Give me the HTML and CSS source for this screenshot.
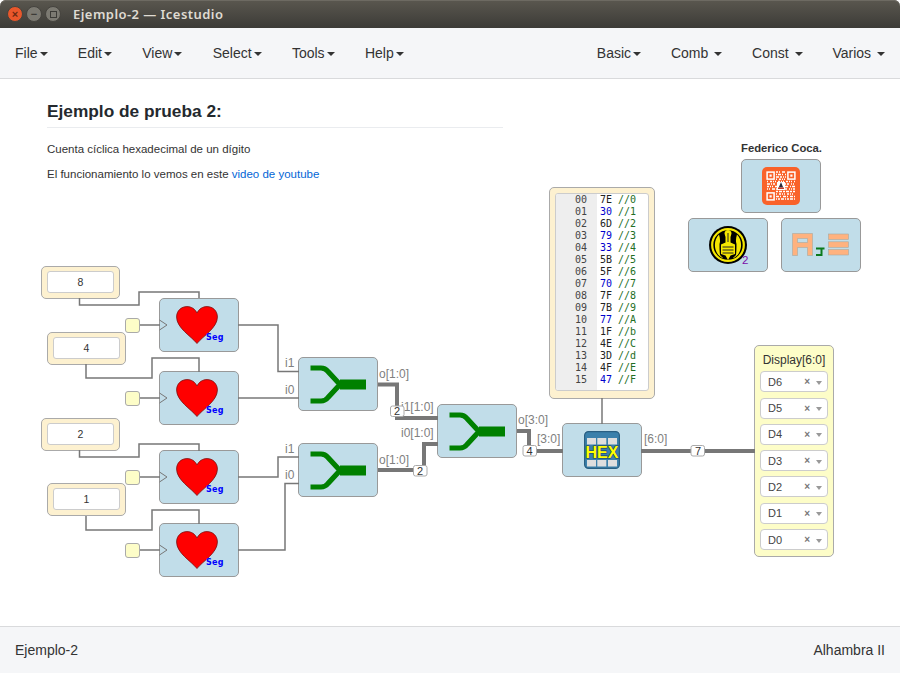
FILE: index.html
```html
<!DOCTYPE html>
<html lang="en">
<head>
    <meta charset="UTF-8">
    <meta name="viewport" content="width=device-width, initial-scale=1.0">
    <title>Ejemplo-2 - Icestudio</title>
    <link rel="stylesheet" href="styles.css">
</head>
<body>
    <!-- Shapes used more than once -->
    <svg class="defs" width="0" height="0">
        <symbol id="heart" viewBox="0 0 42 38">
            <path d="M21 37.500C15 30 .6 22 .6 11 .6 4.500 5.500 .6 11 .6c4.500 0 8 2.400 10 6.400 2-4 5.500-6.400 10-6.400 5.500 0 10.400 3.900 10.400 10.400C41.400 22 27 30 21 37.500Z" fill="#f00" stroke="#7a1010" stroke-width=".8"/>
        </symbol>
        <symbol id="mux" viewBox="0 0 79 53">
            <path d="M11.500 10H22c3 0 5 1 7 3.500L41 26.500 29 39.500C27 42 25 43 22 43H11.500" fill="none" stroke="#008000" stroke-width="5.200"/>
            <rect x="41" y="21.500" width="26" height="10" fill="#008000"/>
        </symbol>
    </svg>

    <header class="titlebar">
        <div class="win-buttons">
            <span class="win-btn win-close">&times;</span>
            <span class="win-btn">&minus;</span>
            <span class="win-btn"><i class="win-max"></i></span>
        </div>
        <span class="win-title">Ejemplo-2 — Icestudio</span>
    </header>

    <nav class="menubar">
        <div class="menu-group">
            <a class="menu-item">File<span class="caret"></span></a>
            <a class="menu-item">Edit<span class="caret"></span></a>
            <a class="menu-item">View<span class="caret"></span></a>
            <a class="menu-item">Select<span class="caret"></span></a>
            <a class="menu-item">Tools<span class="caret"></span></a>
            <a class="menu-item">Help<span class="caret"></span></a>
        </div>
        <div class="menu-group menu-right">
            <a class="menu-item">Basic<span class="caret"></span></a>
            <a class="menu-item">Comb <span class="caret"></span></a>
            <a class="menu-item">Const <span class="caret"></span></a>
            <a class="menu-item">Varios <span class="caret"></span></a>
        </div>
    </nav>

    <main class="canvas">
        <section class="note">
            <h2>Ejemplo de prueba 2:</h2>
            <p>Cuenta cíclica hexadecimal de un dígito</p>
            <p>El funcionamiento lo vemos en este <a href="#">video de youtube</a></p>
        </section>

        <p class="author">Federico Coca.</p>

        <!-- Constants -->
        <div class="const const-8"><span class="const-value">8</span></div>
        <div class="const const-4"><span class="const-value">4</span></div>
        <div class="const const-2"><span class="const-value">2</span></div>
        <div class="const const-1"><span class="const-value">1</span></div>

        <!-- Clock inputs -->
        <div class="clock clock-a"></div>
        <div class="clock clock-b"></div>
        <div class="clock clock-c"></div>
        <div class="clock clock-d"></div>

        <!-- Counter blocks -->
        <div class="block seg seg-a"><svg class="heart"><use href="#heart"/></svg><span class="seg-label">Seg</span></div>
        <div class="block seg seg-b"><svg class="heart"><use href="#heart"/></svg><span class="seg-label">Seg</span></div>
        <div class="block seg seg-c"><svg class="heart"><use href="#heart"/></svg><span class="seg-label">Seg</span></div>
        <div class="block seg seg-d"><svg class="heart"><use href="#heart"/></svg><span class="seg-label">Seg</span></div>

        <!-- Bus joins -->
        <div class="block mux-a"><svg class="mux"><use href="#mux"/></svg></div>
        <div class="block mux-b"><svg class="mux"><use href="#mux"/></svg></div>
        <div class="block mux-c"><svg class="mux"><use href="#mux"/></svg></div>

        <!-- Decoder memory -->
        <div class="memory">
            <div class="editor">
                <div class="gutter">00<br>01<br>02<br>03<br>04<br>05<br>06<br>07<br>08<br>09<br>10<br>11<br>12<br>13<br>14<br>15</div>
                <div class="code">
                    <div>7E <em>//0</em></div>
                    <div><b>30</b> <em>//1</em></div>
                    <div>6D <em>//2</em></div>
                    <div><b>79</b> <em>//3</em></div>
                    <div><b>33</b> <em>//4</em></div>
                    <div>5B <em>//5</em></div>
                    <div>5F <em>//6</em></div>
                    <div><b>70</b> <em>//7</em></div>
                    <div>7F <em>//8</em></div>
                    <div>7B <em>//9</em></div>
                    <div><b>77</b> <em>//A</em></div>
                    <div>1F <em>//b</em></div>
                    <div>4E <em>//C</em></div>
                    <div>3D <em>//d</em></div>
                    <div>4F <em>//E</em></div>
                    <div><b>47</b> <em>//F</em></div>
                </div>
            </div>
        </div>

        <!-- HEX block -->
        <div class="block hex">
            <svg class="hex-icon" viewBox="0 0 36 38">
                <rect x=".6" y=".6" width="34.800" height="36.800" rx="4" fill="#3b80ab" stroke="#2a5f82" stroke-width="1.200"/>
                <g fill="#dedede">
                    <rect x="3" y="7" width="9" height="6.500"/><rect x="13.300" y="7" width="9" height="6.500"/><rect x="24" y="7" width="9" height="6.500"/>
                    <rect x="3" y="29" width="9" height="6.500"/><rect x="13.300" y="29" width="9" height="6.500"/><rect x="24" y="29" width="9" height="6.500"/>
                </g>
                <text class="hex-text" x="18" y="26.500" text-anchor="middle">HEX</text>
            </svg>
        </div>

        <!-- Info icons -->
        <div class="block info-qr">
            <svg class="qr-icon" viewBox="0 0 38 38">
                <rect width="38" height="38" rx="5" fill="#f9622a"/>
                <g fill="none" stroke="#fff" stroke-width="1.500">
                    <rect x="5.100" y="5.100" width="7" height="7"/><rect x="25.900" y="5.100" width="7" height="7"/><rect x="5.100" y="25.900" width="7" height="7"/>
                    <path stroke-dasharray="2 1 1 2 3 1" d="M14 5.100H24"/>
                    <path stroke-dasharray="1 1 3 1 1 2" d="M14 7.500H24"/>
                    <path stroke-dasharray="3 1 2 1 1 1" d="M14 10H24"/>
                    <path stroke-dasharray="1 2 2 1 1 1" d="M14 12.300H24"/>
                    <path stroke-dasharray="1 2 2 1 1 1" d="M5 14.500H33"/>
                    <path stroke-dasharray="3 1 1 1 2 2" d="M5 17H15"/>
                    <path stroke-dasharray="1 1 2 2 1 1" d="M23 17H33"/>
                    <path stroke-dasharray="2 1 1 1 1 2" d="M5 19.500H15"/>
                    <path stroke-dasharray="3 2 1 1" d="M23 19.500H33"/>
                    <path stroke-dasharray="1 1 1 2 3 1" d="M5 22H15"/>
                    <path stroke-dasharray="2 2 1 1 1 1" d="M23 22H33"/>
                    <path stroke-dasharray="2 1 3 1" d="M14 24.500H33"/>
                    <path stroke-dasharray="1 2 2 1 1 1" d="M14 27H33"/>
                    <path stroke-dasharray="3 1 1 2" d="M14 29.500H33"/>
                    <path stroke-dasharray="1 1 2 1 3 1" d="M14 32H33"/>
                </g>
                <g fill="#fff"><rect x="7.500" y="7.500" width="2.200" height="2.200"/><rect x="28.300" y="7.500" width="2.200" height="2.200"/><rect x="7.500" y="28.300" width="2.200" height="2.200"/></g>
                <rect x="15" y="15" width="8" height="8" fill="#fff"/>
                <path d="M19 15l2.200 5.500h-4.400Z" fill="#2a2a3a"/>
                <path d="M16 20.500h6v1.500h-6Z" fill="#c0392b"/>
            </svg>
        </div>
        <div class="block info-jedi">
            <svg class="jedi-icon" viewBox="0 0 38 38">
                <circle cx="19" cy="19" r="19"/>
                <circle cx="19" cy="19" r="15.800" fill="none" stroke="#f5e600" stroke-width="2.200"/>
                <path d="M19 4c2 0 3.500 1.500 3.500 3.500L21.500 11v5.500l4.500 2V28l-4.500 1.500L19 34l-2.500-4.500L12 28v-9.500l4.500-2V11l-1-3.500C15.500 5.500 17 4 19 4Z" fill="#f5e600"/>
                <path d="M10 8.500C5.500 13 4.500 21 8 27c1.700 2.800 4 4.500 6.500 5.500L11 29c-.5-4-.5-7.500-.5-11 1-3 .5-6.500-.5-9.500ZM28 8.500c4.500 4.500 5.500 12.500 2 18.500-1.700 2.800-4 4.500-6.500 5.500L27 29c.5-4 .5-7.500.5-11-1-3-.5-6.500.5-9.500Z" fill="#f5e600"/>
                <path d="M13.500 21h11M13.500 24h11M13.500 27h11M19 7v9" stroke="#222" stroke-width="1"/>
            </svg>
            <span class="jedi-sub">2</span>
        </div>
        <div class="block info-aje">
            <svg class="aje-icon" viewBox="0 0 58 24">
                <g fill="#ffb27f" stroke="#a9a9a0" stroke-width=".6">
                    <path d="M.5 22.500V.5h20v22h-5v-8h-10v8ZM5.500 5.500v4h10v-4Z" fill-rule="evenodd"/>
                    <rect x="36.500" y="1" width="20" height="5.500"/>
                    <rect x="36.500" y="8.800" width="20" height="5.500"/>
                    <rect x="36.500" y="16.500" width="20" height="5.500"/>
                </g>
                <path d="M24 15.500h8.500M29.500 15.500v6.500H24" fill="none" stroke="#0b7a1c" stroke-width="2"/>
            </svg>
        </div>

        <!-- Display output -->
        <div class="display">
            <div class="display-title">Display[6:0]</div>
            <div class="pin-row"><span class="pin-name">D6</span><span class="pin-x">×</span><span class="pin-caret"></span></div>
            <div class="pin-row"><span class="pin-name">D5</span><span class="pin-x">×</span><span class="pin-caret"></span></div>
            <div class="pin-row"><span class="pin-name">D4</span><span class="pin-x">×</span><span class="pin-caret"></span></div>
            <div class="pin-row"><span class="pin-name">D3</span><span class="pin-x">×</span><span class="pin-caret"></span></div>
            <div class="pin-row"><span class="pin-name">D2</span><span class="pin-x">×</span><span class="pin-caret"></span></div>
            <div class="pin-row"><span class="pin-name">D1</span><span class="pin-x">×</span><span class="pin-caret"></span></div>
            <div class="pin-row"><span class="pin-name">D0</span><span class="pin-x">×</span><span class="pin-caret"></span></div>
        </div>

        <!-- Wires, ports and bus sizes. The viewBox uses window coordinates -->
        <svg class="wires" viewBox="0 79 900 547">
            <g class="wire">
                <path d="M79.500 298V305H139V292H199V298"/>
                <path d="M86 364V378H152V358H199V372"/>
                <path d="M79.500 450V457H139V444H199V451"/>
                <path d="M86 516V530H152V510H199V524"/>
                <path d="M140 325H160M140 398H160M140 477H160M140 550H160"/>
                <path d="M238 325H278V371.500H299"/>
                <path d="M238 398H299"/>
                <path d="M238 477H278V457H299"/>
                <path d="M238 550H285V483.500H299"/>
                <path d="M602 398V424"/>
            </g>
            <g class="bus">
                <path d="M378 384.500H397V418H438"/>
                <path d="M378 470H424V444H438"/>
                <path d="M517 431H529V451H563"/>
                <path d="M641 451H755"/>
            </g>
            <g class="clk">
                <path d="M159.500 320L167 325L159.500 330M159.500 393L167 398L159.500 403M159.500 472L167 477L159.500 482M159.500 545L167 550L159.500 555"/>
            </g>
            <g class="port">
                <text x="285" y="367">i1</text>
                <text x="285" y="394">i0</text>
                <text x="285" y="453">i1</text>
                <text x="285" y="479">i0</text>
                <text x="379" y="378">o[1:0]</text>
                <text x="379" y="464">o[1:0]</text>
                <text x="401" y="411">i1[1:0]</text>
                <text x="401" y="437">i0[1:0]</text>
                <text x="518" y="424">o[3:0]</text>
                <text x="537" y="443">[3:0]</text>
                <text x="644" y="443">[6:0]</text>
            </g>
            <g class="size">
                <rect x="390.500" y="406" width="13.500" height="10.500" rx="2"/><text x="397" y="415">2</text>
                <rect x="413.500" y="465.500" width="13.500" height="10.500" rx="2"/><text x="420" y="474.500">2</text>
                <rect x="523" y="445.500" width="13.500" height="10.500" rx="2"/><text x="529.500" y="454.500">4</text>
                <rect x="691" y="445.500" width="13.500" height="10.500" rx="2"/><text x="698" y="454.500">7</text>
            </g>
        </svg>
    </main>

    <footer class="statusbar">
        <span>Ejemplo-2</span>
        <span>Alhambra II</span>
    </footer>
</body>
</html>
```

FILE: styles.css
```css
* {
    box-sizing: border-box;
}
html, body {
    height: 100%;
}
body {
    margin: 0;
    display: flex;
    flex-direction: column;
    overflow: hidden;
    background: #fff;
    color: #333;
    font-family: "Liberation Sans", Arial, sans-serif;
    font-size: 14px;
}
.defs {
    position: absolute;
}

/* Window title */
.titlebar {
    height: 28px;
    display: flex;
    align-items: center;
    padding-left: 7px;
    background: linear-gradient(#5a574f, #3c3b37);
    border-radius: 6px 6px 0 0;
    box-shadow: inset 0 1px 0 #6d6a62;
}
.win-buttons {
    display: flex;
    gap: 3px;
}
.win-btn {
    width: 16px;
    height: 16px;
    border-radius: 50%;
    display: flex;
    align-items: center;
    justify-content: center;
    background: #7c7a72;
    border: 1px solid #45433e;
    color: #3c3b37;
    font-size: 11px;
    font-weight: bold;
    line-height: 1;
}
.win-close {
    background: #e9572b;
    color: #6b2a12;
}
.win-max {
    width: 7px;
    height: 7px;
    border: 1px solid #3c3b37;
}
.win-title {
    margin-left: 12px;
    color: #dfdbd2;
    font-family: "Noto Sans", sans-serif;
    font-size: 13px;
    font-weight: 600;
    letter-spacing: .45px;
}

/* Menus */
.menubar {
    height: 51px;
    display: flex;
    justify-content: space-between;
    align-items: center;
    padding: 0 15px;
    background: #f5f6f8;
    border-bottom: 1px solid #d9dadc;
}
.menu-group {
    display: flex;
    gap: 30.300px;
}
.menu-right {
    gap: 29.900px;
}
.menu-item {
    color: #333;
    white-space: pre;
}
.caret {
    display: inline-block;
    margin-left: 2px;
    vertical-align: middle;
    border-top: 4px solid #333;
    border-left: 4px solid transparent;
    border-right: 4px solid transparent;
}

/* Diagram canvas */
.canvas {
    flex: 1;
    position: relative;
}
.note {
    width: 456px;
    margin-left: 47px;
    font-size: 11.500px;
}
.note h2 {
    margin: 0 0 15px;
    padding: 23px 0 6px;
    border-bottom: 1px solid #eaecef;
    color: #24292e;
    font-size: 17.300px;
    line-height: 19px;
}
.note p {
    margin: 0 0 12px;
    line-height: 13px;
}
.note a {
    color: #0366d6;
    text-decoration: none;
}
.author {
    position: absolute;
    left: 741px;
    top: 63px;
    width: 80px;
    margin: 0;
    text-align: center;
    white-space: nowrap;
    font-size: 11.300px;
    font-weight: bold;
    line-height: 13px;
}
.wires {
    position: absolute;
    left: 0;
    top: 0;
    width: 900px;
    height: 547px;
    pointer-events: none;
}
.wire path {
    fill: none;
    stroke: #777;
    stroke-width: 1.500;
}
.bus path {
    fill: none;
    stroke: #777;
    stroke-width: 4;
}
.clk path {
    fill: none;
    stroke: #777;
    stroke-width: 1;
}
.port text {
    fill: #808080;
    font-size: 12px;
}
.size rect {
    fill: #fff;
    stroke: #aaa;
}
.size text {
    fill: #333;
    font-size: 11px;
    text-anchor: middle;
}

/* Generic block */
.block {
    position: absolute;
    width: 80px;
    height: 54px;
    display: flex;
    align-items: center;
    justify-content: center;
    background: #c1dde9;
    border: 1px solid #999;
    border-radius: 5px;
}

/* Constants */
.const {
    position: absolute;
    width: 79px;
    height: 33px;
    padding: 4px 5px;
    background: #fdf1d0;
    border: 1px solid #aaa;
    border-radius: 5px;
}
.const-value {
    display: block;
    height: 22px;
    background: #fff;
    border: 1px solid #ccc;
    border-radius: 3px;
    text-align: center;
    font-size: 10.500px;
    line-height: 20px;
}
.const-8 { left: 41px; top: 187px; }
.const-4 { left: 47px; top: 253px; }
.const-2 { left: 41px; top: 339px; }
.const-1 { left: 47px; top: 404px; }

.clock {
    position: absolute;
    left: 125px;
    width: 15px;
    height: 15px;
    background: #fdfdc8;
    border: 1px solid #aaa;
    border-radius: 3px;
}
.clock-a { top: 239px; }
.clock-b { top: 312px; }
.clock-c { top: 391px; }
.clock-d { top: 464px; }

.seg { left: 159px; }
.seg-a { top: 219px; }
.seg-b { top: 292px; }
.seg-c { top: 371px; }
.seg-d { top: 444px; }
.heart {
    width: 42px;
    height: 38px;
    margin-right: 4px;
}
.seg-label {
    position: absolute;
    left: 46px;
    top: 34px;
    color: #00f;
    font-family: "DejaVu Sans", sans-serif;
    font-size: 8px;
    font-weight: bold;
    letter-spacing: .3px;
    line-height: 10px;
}

.mux {
    width: 79px;
    height: 53px;
    flex: none;
}
.mux-a { left: 298px; top: 278px; }
.mux-b { left: 298px; top: 364px; }
.mux-c { left: 437px; top: 325px; }

/* Memory editor */
.memory {
    position: absolute;
    left: 549px;
    top: 108px;
    width: 106px;
    height: 212px;
    padding: 5px 5px 7px;
    background: #fdf1d0;
    border: 1px solid #aaa;
    border-radius: 5px;
}
.editor {
    height: 100%;
    display: flex;
    overflow: hidden;
    background: #fff;
    border: 1px solid #ccc;
    border-radius: 3px;
    font-family: "DejaVu Sans Mono", monospace;
    font-size: 10px;
    line-height: 12px;
}
.gutter {
    width: 41px;
    padding: 0 10px 0 0;
    text-align: right;
    background: #eee;
    color: #444;
}
.code {
    padding-left: 3px;
    color: #222;
}
.code b {
    font-weight: normal;
    color: #0000cd;
}
.code em {
    font-style: normal;
    color: #236e24;
}

/* Hex block and info icons */
.hex { left: 562px; top: 344px; }
.hex-icon {
    width: 36px;
    height: 38px;
}
.hex-text {
    fill: #ff0;
    stroke: #1b3f55;
    stroke-width: 1.200px;
    paint-order: stroke;
    font-size: 16px;
    font-weight: bold;
}
.info-qr { left: 741px; top: 80px; }
.qr-icon {
    width: 38px;
    height: 38px;
}
.info-jedi { left: 688px; top: 139px; }
.jedi-icon {
    width: 38px;
    height: 38px;
}
.jedi-sub {
    position: absolute;
    left: 53px;
    top: 35px;
    color: #7a0da8;
    font-size: 11.500px;
    line-height: 12px;
}
.info-aje { left: 781px; top: 139px; }
.aje-icon {
    width: 58px;
    height: 24px;
}

/* Display pins */
.display {
    position: absolute;
    left: 754px;
    top: 266px;
    width: 80px;
    height: 212px;
    display: flex;
    flex-direction: column;
    gap: 5.300px;
    padding: 0 5px;
    background: #fdfdc8;
    border: 1px solid #aaa;
    border-radius: 5px;
    font-size: 12px;
}
.display-title {
    height: 20px;
    padding-top: 7px;
    text-align: center;
    white-space: nowrap;
    color: #333;
    line-height: 14px;
}
.pin-row {
    height: 21px;
    display: flex;
    align-items: center;
    padding: 0 5px 0 7px;
    background: #fff;
    border: 1px solid #ccc;
    border-radius: 4px;
    color: #444;
    font-size: 11px;
}
.pin-name {
    flex: 1;
}
.pin-x {
    margin-right: 6px;
    color: #777;
    font-size: 10px;
    font-weight: bold;
}
.pin-caret {
    border-top: 4px solid #999;
    border-left: 3.500px solid transparent;
    border-right: 3.500px solid transparent;
    margin-top: 2px;
}

/* Status bar */
.statusbar {
    height: 47px;
    display: flex;
    justify-content: space-between;
    align-items: center;
    padding: 0 15px;
    background: #f5f6f8;
    border-top: 1px solid #d9dadc;
}
```
